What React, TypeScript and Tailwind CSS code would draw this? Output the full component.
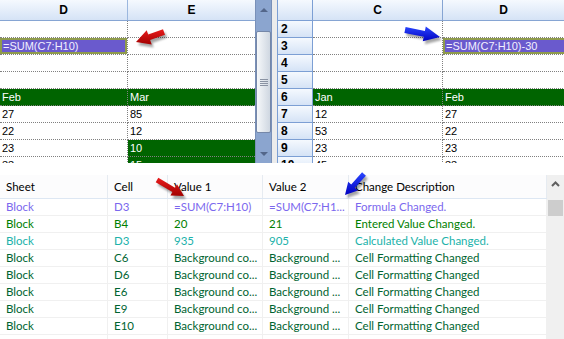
import React from "react";

type C = { t?: string; k?: "g" | "p" };

const leftRows: [C, C][] = [
  [{}, {}],
  [{ t: "=SUM(C7:H10)", k: "p" }, {}],
  [{}, {}],
  [{}, {}],
  [{ t: "Feb", k: "g" }, { t: "Mar", k: "g" }],
  [{ t: "27" }, { t: "85" }],
  [{ t: "22" }, { t: "12" }],
  [{ t: "23" }, { t: "10", k: "g" }],
  [{ t: "33" }, { t: "15", k: "g" }],
];

const rightRows: [C, C][] = [
  [{}, {}],
  [{}, { t: "=SUM(C7:H10)-30", k: "p" }],
  [{}, {}],
  [{}, {}],
  [{ t: "Jan", k: "g" }, { t: "Feb", k: "g" }],
  [{ t: "12" }, { t: "27" }],
  [{ t: "53" }, { t: "22" }],
  [{ t: "23" }, { t: "23" }],
  [{ t: "45" }, { t: "33" }],
];

function CellBody({ c }: { c: C }) {
  if (c.k === "p") {
    return (
      <div className="h-full w-full bg-[#6a5acd] border-2 border-[#8f9b4c] text-[#f2f0ff] flex items-center pl-[1px] whitespace-nowrap overflow-hidden">
        {c.t}
      </div>
    );
  }
  return <span className="pl-[2px] whitespace-nowrap">{c.t}</span>;
}

function DataCell({ c, w, last }: { c: C; w: string; last?: boolean }) {
  const green = c.k === "g";
  return (
    <div
      className={
        w +
        " h-full shrink-0 flex items-center overflow-hidden border-b border-dotted border-[#808080] " +
        (last ? "" : "border-r ") +
        (green ? "bg-[#006400] text-white" : "text-black")
      }
    >
      <CellBody c={c} />
    </div>
  );
}

const hdrBg = "bg-linear-to-b from-[#f5f9fe] to-[#d5e3f6]";

function LeftPane() {
  return (
    <div className="w-[255px] shrink-0 flex flex-col text-[11px]">
      <div className={"flex h-[21px] shrink-0 border-b border-[#86a5d3] " + hdrBg}>
        <div className="w-[128px] border-r border-[#9bb7de] flex items-center justify-center font-bold text-[12px]">D</div>
        <div className="flex-1 flex items-center justify-center font-bold text-[12px]">E</div>
      </div>
      {leftRows.map((r, i) => (
        <div key={i} className="flex h-[17px] shrink-0">
          <DataCell c={r[0]} w="w-[128px]" />
          <DataCell c={r[1]} w="w-[127px]" last />
        </div>
      ))}
    </div>
  );
}

function RightPane() {
  return (
    <div className="flex-1 flex flex-col text-[11px] overflow-hidden">
      <div className="flex h-[21px] shrink-0">
        <div className={"w-[36px] shrink-0 border-l border-r border-b border-[#7c9fd4] " + hdrBg} />
        <div className={"w-[130px] shrink-0 border-r border-b border-[#86a5d3] flex items-center justify-center font-bold text-[12px] " + hdrBg}>C</div>
        <div className={"flex-1 border-b border-[#86a5d3] flex items-center justify-center font-bold text-[12px] " + hdrBg}>D</div>
      </div>
      {rightRows.map((r, i) => (
        <div key={i} className="flex h-[17px] shrink-0">
          <div className={"w-[36px] shrink-0 h-full border-l border-r border-b border-[#7c9fd4] flex items-center pl-[3px] font-bold text-[12px] " + hdrBg}>
            {i + 2}
          </div>
          <DataCell c={r[0]} w="w-[130px]" />
          <DataCell c={r[1]} w="w-[130px]" last />
        </div>
      ))}
    </div>
  );
}

function VScroll() {
  return (
    <div className="w-[17px] h-full shrink-0 flex flex-col bg-[#8ba5cf] border-x border-[#7990b8]">
      <div className="h-[31px] shrink-0 flex justify-center pt-[8px]">
        <svg width="8" height="4" viewBox="0 0 8 4">
          <polygon points="0,4 4,0 8,4" fill="#53668a" />
        </svg>
      </div>
      <div className="h-[102px] shrink-0 border border-[#7587a8] rounded-[2px] bg-linear-to-r from-[#f6f8fa] to-[#cfd7e1] flex items-center justify-center">
        <div className="flex flex-col gap-[1px]">
          <div className="w-[8px] h-px bg-[#8a93a3]" />
          <div className="w-[8px] h-px bg-[#8a93a3]" />
          <div className="w-[8px] h-px bg-[#8a93a3]" />
          <div className="w-[8px] h-px bg-[#8a93a3]" />
        </div>
      </div>
      <div className="flex-1 flex items-end justify-center pb-[7px]">
        <svg width="8" height="4" viewBox="0 0 8 4">
          <polygon points="0,0 8,0 4,4" fill="#53668a" />
        </svg>
      </div>
    </div>
  );
}

type Row = { c: string; cells: string[] };
const tableRows: Row[] = [
  { c: "text-[#7b68ee]", cells: ["Block", "D3", "=SUM(C7:H10)", "=SUM(C7:H1...", "Formula Changed."] },
  { c: "text-[#008000]", cells: ["Block", "B4", "20", "21", "Entered Value Changed."] },
  { c: "text-[#20b2aa]", cells: ["Block", "D3", "935", "905", "Calculated Value Changed."] },
  { c: "text-[#006430]", cells: ["Block", "C6", "Background co...", "Background ...", "Cell Formatting Changed"] },
  { c: "text-[#006430]", cells: ["Block", "D6", "Background co...", "Background ...", "Cell Formatting Changed"] },
  { c: "text-[#006430]", cells: ["Block", "E6", "Background co...", "Background ...", "Cell Formatting Changed"] },
  { c: "text-[#006430]", cells: ["Block", "E9", "Background co...", "Background ...", "Cell Formatting Changed"] },
  { c: "text-[#006430]", cells: ["Block", "E10", "Background co...", "Background ...", "Cell Formatting Changed"] },
  { c: "text-black", cells: ["", "", "", "", ""] },
];

const colW = ["w-[108px]", "w-[60px]", "w-[95px]", "w-[86px]", "flex-1"];

function Table() {
  return (
    <div className="flex-1 flex flex-col overflow-hidden font-['Lato',sans-serif] text-[11.5px]">
      <div className="flex h-[24px] shrink-0 bg-[#fcfcfd] border-b border-[#dde7f3] text-black">
        {["Sheet", "Cell", "Value 1", "Value 2", "Change Description"].map((h, i) => (
          <div key={i} className={colW[i] + " shrink-0 h-full flex items-center pl-[6px] border-r border-[#e6ebf1]"}>
            {h}
          </div>
        ))}
      </div>
      {tableRows.map((r, i) => (
        <div key={i} className={"flex h-[17px] shrink-0 " + r.c}>
          {r.cells.map((t, j) => (
            <div key={j} className={colW[j] + " shrink-0 h-full flex items-center pl-[6px] whitespace-nowrap overflow-hidden border-r border-b border-[#f0f0f0]"}>
              {t}
            </div>
          ))}
        </div>
      ))}
    </div>
  );
}

function TableScroll() {
  return (
    <div className="w-[17px] h-full shrink-0 bg-[#f0f0f0] flex flex-col">
      <div className="h-[17px] shrink-0 flex items-center justify-center">
        <svg width="9" height="6" viewBox="0 0 9 6">
          <polyline points="1,5 4.5,1.5 8,5" fill="none" stroke="#606060" strokeWidth="2" />
        </svg>
      </div>
      <div className="mt-[8px] mx-[1px] h-[16px] bg-[#cdcdcd]" />
    </div>
  );
}

function arrowPts(x1: number, y1: number, x2: number, y2: number, sw: number, hl: number, hw: number) {
  const dx = x2 - x1;
  const dy = y2 - y1;
  const L = Math.hypot(dx, dy);
  const ux = dx / L;
  const uy = dy / L;
  const px = -uy;
  const py = ux;
  const bx = x2 - ux * hl;
  const by = y2 - uy * hl;
  const p = [
    [x1 + (px * sw) / 2, y1 + (py * sw) / 2],
    [bx + (px * sw) / 2, by + (py * sw) / 2],
    [bx + (px * hw) / 2, by + (py * hw) / 2],
    [x2, y2],
    [bx - (px * hw) / 2, by - (py * hw) / 2],
    [bx - (px * sw) / 2, by - (py * sw) / 2],
    [x1 - (px * sw) / 2, y1 - (py * sw) / 2],
  ];
  return p.map((q) => q[0].toFixed(1) + "," + q[1].toFixed(1)).join(" ");
}

function Arrow({ a, color }: { a: number[]; color: "r" | "b" }) {
  const pts = arrowPts(a[0], a[1], a[2], a[3], a[4], a[5], a[6]);
  return (
    <g>
      <polygon points={pts} fill="#000" opacity="0.35" transform="translate(2,3)" filter="url(#blur)" />
      <polygon points={pts} fill={color === "r" ? "url(#gr)" : "url(#gb)"} />
    </g>
  );
}

function Arrows() {
  return (
    <svg className="absolute left-0 top-0 pointer-events-none" width="564" height="339" viewBox="0 0 564 339">
      <defs>
        <filter id="blur" x="-50%" y="-50%" width="200%" height="200%">
          <feGaussianBlur stdDeviation="1.3" />
        </filter>
        <linearGradient id="gr" x1="0" y1="0" x2="0" y2="1">
          <stop offset="0" stopColor="#e81c1c" />
          <stop offset="1" stopColor="#a30000" />
        </linearGradient>
        <linearGradient id="gb" x1="0" y1="0" x2="0" y2="1">
          <stop offset="0" stopColor="#2a46ff" />
          <stop offset="1" stopColor="#0000c0" />
        </linearGradient>
      </defs>
      <Arrow a={[164, 32, 136, 42, 6, 14, 15]} color="r" />
      <Arrow a={[405, 30, 440, 37, 6, 16, 15]} color="b" />
      <Arrow a={[157, 180, 184, 196, 5, 12, 13]} color="r" />
      <Arrow a={[364, 174, 345, 195, 5, 12, 13]} color="b" />
    </svg>
  );
}

export default function App() {
  return (
    <div className="relative w-[564px] h-[339px] overflow-hidden bg-white font-['Liberation_Sans',Arial,sans-serif] text-black">
      <div className="flex h-[163px] overflow-hidden">
        <LeftPane />
        <VScroll />
        <div className="w-[5px] h-full shrink-0 bg-[#ececec]" />
        <RightPane />
      </div>
      <div className="mt-[12px] flex h-[164px]">
        <Table />
        <TableScroll />
      </div>
      <Arrows />
    </div>
  );
}
